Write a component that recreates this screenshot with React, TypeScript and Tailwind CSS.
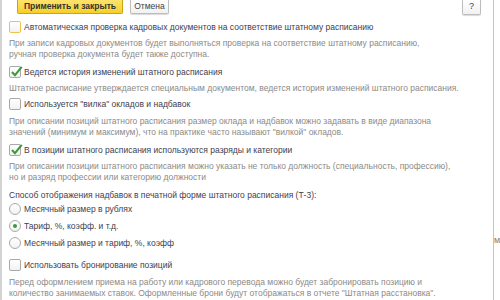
import React from "react";

const font = { fontFamily: '"Liberation Sans", Arial, sans-serif' };

function Check({ checked, focused }: { checked?: boolean; focused?: boolean }) {
    return (
        <div
            className={
                "relative w-[12px] h-[12px] shrink-0 rounded-[2px] border bg-gradient-to-b from-white to-[#f2f2f2] " +
                (focused ? "border-[#f0c24a]" : "border-[#a9a9a9]")
            }
        >
            {checked && (
                <svg viewBox="0 0 12 12" className="absolute left-[0px] top-[-2px] w-[13px] h-[13px]">
                    <path d="M1.8 6.4 L4.6 9.4 L10.8 1.8" fill="none" stroke="#3b9a3b" strokeWidth="1.9" />
                </svg>
            )}
        </div>
    );
}

function Radio({ checked }: { checked?: boolean }) {
    return (
        <div className="w-[12px] h-[12px] shrink-0 rounded-full border border-[#a9a9a9] bg-gradient-to-b from-white to-[#f2f2f2] flex items-center justify-center">
            {checked && <div className="w-[4px] h-[4px] rounded-full bg-[#3b9a3b]" />}
        </div>
    );
}

function Label({ children }: { children: React.ReactNode }) {
    return <span className="text-[8.5px] leading-[14px] text-[#404050]">{children}</span>;
}

function Desc({ children, className }: { children: React.ReactNode; className?: string }) {
    return <div className={"text-[8.5px] leading-[11px] text-[#8c8a88] " + (className ?? "")}>{children}</div>;
}

export default function App() {
    return (
        <div className="w-[500px] h-[300px] bg-white overflow-hidden flex" style={font}>
            <div className="w-[2px] bg-[#d4d4d4] shrink-0" />
            <div className="w-[491px] shrink-0 flex flex-col pl-[7px]">
                <div className="flex items-start h-[20px]">
                    <div className="ml-[8px] w-[106px] h-[14px] rounded-b-[2px] border border-t-0 border-[#c9a414] bg-gradient-to-b from-[#fde36a] to-[#f7cf1f] flex items-center justify-center text-[8.5px] font-bold text-[#333]">
                        Применить и закрыть
                    </div>
                    <div className="ml-[7px] w-[39px] h-[14px] rounded-b-[2px] border border-t-0 border-[#bdbdbd] bg-gradient-to-b from-white to-[#f1f1f1] shadow-[0_1px_1px_rgba(0,0,0,0.15)] flex items-center justify-center text-[8.5px] text-[#444]">
                        Отмена
                    </div>
                    <div className="ml-auto mr-[12px] w-[19px] h-[15px] rounded-b-[2px] border border-t-0 border-[#bdbdbd] bg-gradient-to-b from-white to-[#f1f1f1] shadow-[0_1px_1px_rgba(0,0,0,0.15)] flex items-center justify-center text-[9px] text-[#444]">
                        ?
                    </div>
                </div>

                <div className="flex items-center gap-[3px] h-[14px]">
                    <Check focused />
                    <Label>Автоматическая проверка кадровых документов на соответствие штатному расписанию</Label>
                </div>
                <Desc className="mt-[4px]">
                    При записи кадровых документов будет выполняться проверка на соответствие штатному расписанию,
                    <br />
                    ручная проверка документа будет также доступна.
                </Desc>

                <div className="flex items-center gap-[3px] h-[14px] mt-[5px]">
                    <Check checked />
                    <Label>Ведется история изменений штатного расписания</Label>
                </div>
                <Desc className="mt-[4px]">
                    Штатное расписание утверждается специальным документом, ведется история изменений штатного расписания.
                </Desc>

                <div className="flex items-center gap-[3px] h-[14px] mt-[3px]">
                    <Check />
                    <Label>Используется "вилка" окладов и надбавок</Label>
                </div>
                <Desc className="mt-[5px]">
                    При описании позиций штатного расписания размер оклада и надбавок можно задавать в виде диапазона
                    <br />
                    значений (минимум и максимум), что на практике часто называют "вилкой" окладов.
                </Desc>

                <div className="flex items-center gap-[3px] h-[14px] mt-[5px]">
                    <Check checked />
                    <Label>В позиции штатного расписания используются разряды и категории</Label>
                </div>
                <Desc className="mt-[4px]">
                    При описании позиции штатного расписания можно указать не только должность (специальность, профессию),
                    <br />
                    но и разряд профессии или категорию должности
                </Desc>

                <div className="mt-[6px] text-[8.5px] leading-[12px] text-[#404050]">
                    Способ отображения надбавок в печатной форме штатного расписания (Т-3):
                </div>
                <div className="flex items-center gap-[3px] h-[14px] mt-[1px]">
                    <Radio />
                    <Label>Месячный размер в рублях</Label>
                </div>
                <div className="flex items-center gap-[3px] h-[14px] mt-[3px]">
                    <Radio checked />
                    <Label>Тариф, %, коэфф. и т.д.</Label>
                </div>
                <div className="flex items-center gap-[3px] h-[14px] mt-[3px]">
                    <Radio />
                    <Label>Месячный размер и тариф, %, коэфф</Label>
                </div>

                <div className="flex items-center gap-[3px] h-[14px] mt-[8px]">
                    <Check />
                    <Label>Использовать бронирование позиций</Label>
                </div>
                <Desc className="mt-[5px]">
                    Перед оформлением приема на работу или кадрового перевода можно будет забронировать позицию и
                    <br />
                    количество занимаемых ставок. Оформленные брони будут отображаться в отчете "Штатная расстановка".
                </Desc>
            </div>
            <div className="w-[1px] bg-[#c4c4c4] shrink-0" />
            <div className="flex-1 pt-[234px] text-[9px] text-[#8a7a6a] overflow-hidden">м</div>
        </div>
    );
}
